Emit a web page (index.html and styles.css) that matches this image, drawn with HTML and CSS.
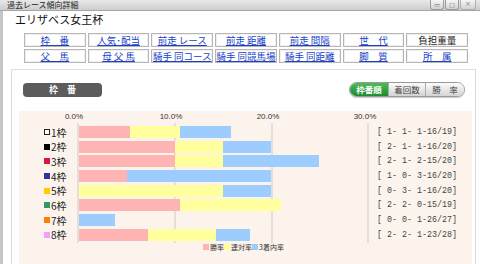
FILE: index.html
```html
<!DOCTYPE html>
<html lang="ja">
<head>
  <meta charset="UTF-8" />
  <title>過去レース傾向詳細</title>
  <link rel="stylesheet" href="styles.css">
</head>
<body>

  <div class="titlebar">
    <span class="title">過去レース傾向詳細</span>
    <div class="controls">
      <span class="ctl">&#9645;</span>
      <span class="ctl">&#9633;</span>
      <span class="ctl close">&#215;</span>
    </div>
  </div>

  <div class="main">
    <h1 class="race">エリザベス女王杯</h1>

    <div class="nav">
      <div class="nav-cell"><a href="#">枠　番</a></div>
      <div class="nav-cell"><a href="#">人気･配当</a></div>
      <div class="nav-cell"><a href="#">前走 レース</a></div>
      <div class="nav-cell"><a href="#">前走 距離</a></div>
      <div class="nav-cell"><a href="#">前走 間隔</a></div>
      <div class="nav-cell"><a href="#">世　代</a></div>
      <div class="nav-cell current">負担重量</div>

      <div class="nav-cell"><a href="#">父　馬</a></div>
      <div class="nav-cell"><a href="#">母 父 馬</a></div>
      <div class="nav-cell"><a href="#">騎手 同コース</a></div>
      <div class="nav-cell"><a href="#">騎手 同競馬場</a></div>
      <div class="nav-cell"><a href="#">騎手 同距離</a></div>
      <div class="nav-cell"><a href="#">脚　質</a></div>
      <div class="nav-cell"><a href="#">所　属</a></div>
    </div>

    <div class="panel">
      <div class="panel-head">
        <div class="pill">枠　番</div>
        <div class="toggle">
          <span class="on">枠番順</span>
          <span>着回数</span>
          <span class="last">勝　率</span>
        </div>
      </div>

      <div class="chart">
        <div class="axis">
          <span>0.0%</span>
          <span>10.0%</span>
          <span>20.0%</span>
          <span>30.0%</span>
        </div>

        <div class="rows">
          <div class="labels">
            <div class="label"><i class="sw f1"></i>1枠</div>
            <div class="label"><i class="sw f2"></i>2枠</div>
            <div class="label"><i class="sw f3"></i>3枠</div>
            <div class="label"><i class="sw f4"></i>4枠</div>
            <div class="label"><i class="sw f5"></i>5枠</div>
            <div class="label"><i class="sw f6"></i>6枠</div>
            <div class="label"><i class="sw f7"></i>7枠</div>
            <div class="label"><i class="sw f8"></i>8枠</div>
          </div>

          <div class="track">
            <div class="bar"><i class="w" style="width:50.5px"></i><i class="r" style="width:50.5px"></i><i class="p" style="width:50.6px"></i></div>
            <div class="bar"><i class="w" style="width:96px"></i><i class="r" style="width:48px"></i><i class="p" style="width:48px"></i></div>
            <div class="bar"><i class="w" style="width:96px"></i><i class="r" style="width:48px"></i><i class="p" style="width:96px"></i></div>
            <div class="bar"><i class="w" style="width:48px"></i><i class="r" style="width:0px"></i><i class="p" style="width:144px"></i></div>
            <div class="bar"><i class="w" style="width:0px"></i><i class="r" style="width:144px"></i><i class="p" style="width:48px"></i></div>
            <div class="bar"><i class="w" style="width:101px"></i><i class="r" style="width:101px"></i><i class="p" style="width:0px"></i></div>
            <div class="bar"><i class="w" style="width:0px"></i><i class="r" style="width:0px"></i><i class="p" style="width:35.6px"></i></div>
            <div class="bar"><i class="w" style="width:68.6px"></i><i class="r" style="width:68.6px"></i><i class="p" style="width:34.3px"></i></div>
          </div>

          <div class="stats">
            <div class="stat">[ 1- 1- 1-16/19]</div>
            <div class="stat">[ 2- 1- 1-16/20]</div>
            <div class="stat">[ 2- 1- 2-15/20]</div>
            <div class="stat">[ 1- 0- 3-16/20]</div>
            <div class="stat">[ 0- 3- 1-16/20]</div>
            <div class="stat">[ 2- 2- 0-15/19]</div>
            <div class="stat">[ 0- 0- 1-26/27]</div>
            <div class="stat">[ 2- 2- 1-23/28]</div>
          </div>
        </div>

        <div class="legend">
          <i class="sw w"></i><span>勝率</span>
          <i class="sw r"></i><span>連対率</span>
          <i class="sw p"></i><span>3着内率</span>
        </div>
      </div>
    </div>
  </div>

</body>
</html>
```

FILE: styles.css
```css
* {
  box-sizing: border-box;
}

html, body {
  margin: 0;
}

body {
  width: 480px;
  height: 264px;
  overflow: hidden;
  background: #fff;
  font-family: "Noto Sans CJK JP", sans-serif;
  color: #222;
}

/* window title */
.titlebar {
  height: 11px;
  background: linear-gradient(#e8e8e8, #cdcdcd);
  border-bottom: 1px solid #a6a6a6;
  display: flex;
  justify-content: space-between;
  padding-left: 7px;
}

.title {
  font-size: 8px;
  line-height: 10px;
  color: #222;
}

.controls {
  display: flex;
  gap: 1px;
  margin-right: 4px;
}

.ctl {
  width: 14px;
  height: 10px;
  border: 1px solid #9c9c9c;
  border-top: none;
  border-radius: 0 0 3px 3px;
  background: linear-gradient(#f6f6f6, #d2d2d2);
  font-family: "DejaVu Sans", sans-serif;
  font-size: 6px;
  line-height: 9px;
  text-align: center;
  color: #666;
}

.ctl.close {
  width: 16px;
  border-color: #b0b0b0;
  font-size: 7px;
  color: #888;
}

.main {
  border-left: 3px solid #c6c6c6;
  height: 253px;
}

.race {
  margin: 0;
  padding: 1px 0 0 12px;
  font-size: 11px;
  line-height: 14px;
  font-weight: normal;
  color: #111;
}

/* link table */
.nav {
  display: grid;
  grid-template-columns: repeat(7, 1fr);
  gap: 2px;
  width: 444px;
  margin: 7px 0 0 21px;
}

.nav-cell {
  height: 14px;
  border: 1px solid #b6b6b6;
  box-shadow: inset 0 0 0 1px #f0f0f0;
  text-align: center;
  font-size: 9.5px;
  line-height: 12px;
  white-space: nowrap;
  overflow: hidden;
}

.nav-cell a {
  color: #1b3fc6;
  text-decoration: underline;
}

.nav-cell.current {
  color: #222;
}

/* result panel */
.panel {
  margin: 6px 0 0 8px;
  width: 465px;
  height: 200px;
  border: 1px solid #dcdcdc;
  border-bottom: none;
}

.panel-head {
  display: flex;
  justify-content: space-between;
  align-items: center;
  padding: 12px 10px 0 11px;
}

.pill {
  width: 79px;
  height: 14px;
  background: #5c5c5c;
  border-radius: 4px;
  color: #fff;
  font-size: 9px;
  line-height: 14px;
  text-align: center;
  font-weight: bold;
}

.toggle {
  display: flex;
  height: 15px;
  border: 1px solid #9a9a9a;
  border-radius: 8px;
  overflow: hidden;
  box-shadow: 0 1px 1px #ccc;
}

.toggle span {
  width: 37px;
  font-size: 8.5px;
  line-height: 13px;
  text-align: center;
  color: #444;
  background: linear-gradient(#fbfbfb, #d4d4d4);
  border-left: 1px solid #aaa;
}

.toggle .on {
  width: 38px;
  background: linear-gradient(#4cbc58, #1d8a2c);
  color: #fff;
  font-weight: bold;
  border-left: none;
}

.toggle .last {
  width: 39px;
}

/* chart */
.chart {
  margin: 14px 3px 0 7px;
  height: 160px;
  background: #fcf4ec;
}

.axis {
  display: flex;
  height: 12px;
  padding-left: 6.5px;
  font-family: "Liberation Sans", sans-serif;
  font-size: 8px;
  line-height: 12px;
  color: #333;
}

.axis span {
  width: 97px;
  text-align: center;
}

.rows {
  display: flex;
}

.labels,
.track,
.stats {
  display: flex;
  flex-direction: column;
  gap: 2.7px;
  padding: 3px 0 2px;
}

.labels {
  width: 58px;
  padding-left: 25px;
}

.label {
  height: 12px;
  display: flex;
  align-items: center;
  gap: 1px;
  font-size: 10px;
  color: #222;
}

.sw {
  display: block;
  width: 6px;
  height: 6px;
}

.f1 { background: #fff; border: 1px solid #222; }
.f2 { background: #000; }
.f3 { background: #dc1446; }
.f4 { background: #33339a; }
.f5 { background: #ffcc00; }
.f6 { background: #329866; }
.f7 { background: #ff8000; }
.f8 { background: #f4a0f4; }

.track {
  width: 290px;
  border-left: 2px solid #e4dfda;
  background: repeating-linear-gradient(to right, transparent 0 95px, #e4dfda 95px 97px);
}

.bar {
  height: 12px;
  display: flex;
}

.bar i {
  display: block;
  height: 100%;
}

.w { background: #ffb4b4; }
.r { background: #ffff9e; }
.p { background: #9dcdff; }

.stats {
  border-left: 2px solid #e4dfda;
  padding-left: 8px;
  font-family: "Liberation Mono", monospace;
  font-size: 8.33px;
  white-space: pre;
  color: #444;
}

.stat {
  height: 12px;
  line-height: 12px;
}

.legend {
  display: flex;
  align-items: center;
  margin-left: 184px;
  height: 8px;
  font-size: 7px;
  line-height: 8px;
  color: #333;
}

.legend .sw {
  margin-right: 1px;
}
```
